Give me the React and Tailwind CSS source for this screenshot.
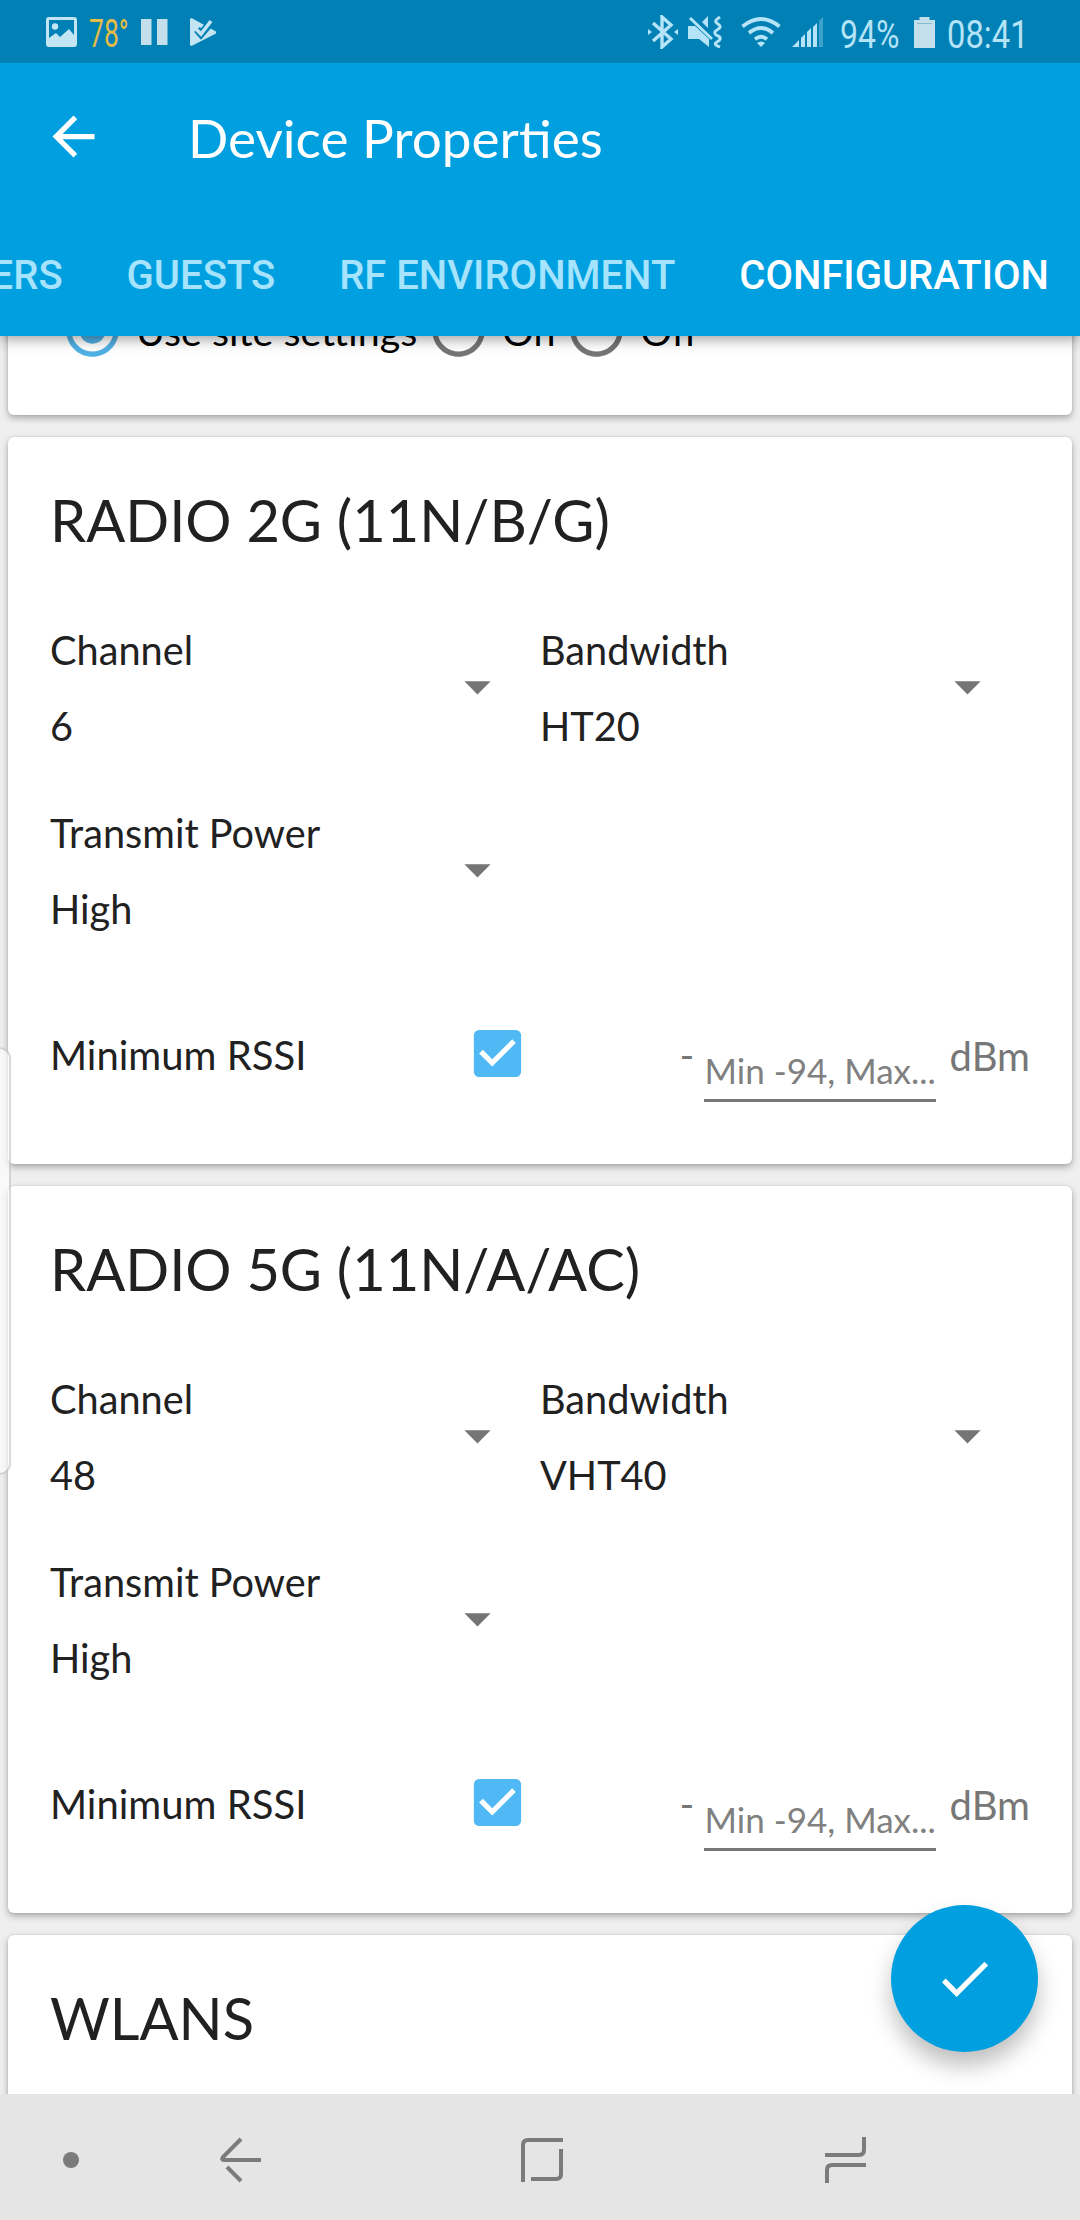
import { clsx } from 'clsx';
import {
  MdArrowBack,
  MdArrowDropDown,
  MdCheck,
  MdCheckBox,
  MdRadioButtonChecked,
  MdRadioButtonUnchecked,
} from 'react-icons/md';

const tabs = ['USERS', 'GUESTS', 'RF ENVIRONMENT', 'CONFIGURATION'];

const radios = [
  { title: 'RADIO 2G (11N/B/G)', channel: '6', bandwidth: 'HT20', power: 'High' },
  { title: 'RADIO 5G (11N/A/AC)', channel: '48', bandwidth: 'VHT40', power: 'High' },
];

const StatusBar = () => (
  <div className="flex h-[63px] items-center bg-[#0080b4] pt-px font-[Roboto,sans-serif] text-[39px] leading-[58px] text-[#b5e3f7]">
    {/* Notifications */}
    <svg className="ml-[46px] w-[31px] shrink-0" viewBox="0 0 31 30" fill="#c3e4f2">
      <path
        fillRule="evenodd"
        d="M3 0h25a3 3 0 0 1 3 3v24a3 3 0 0 1-3 3H3a3 3 0 0 1-3-3V3a3 3 0 0 1 3-3zM3 3v18l7-5 4 4 9-8 5 6V3z"
      />
      <circle cx="9" cy="9.500" r="3.200" />
    </svg>
    <span className="ml-[12px] w-[38px] origin-left scale-x-[0.68] pt-[4px] whitespace-nowrap text-[#e5bc45]">78°</span>
    <svg className="ml-[14px] w-[27px] shrink-0" viewBox="0 0 27 26" fill="#c3dfec">
      <path d="M0 0h10.500v26H0zM16 0h10.500v26H16z" />
    </svg>
    <svg className="ml-[22px] w-[27px] shrink-0" viewBox="0 0 27 28">
      <path d="M1.500 0L26 13.500v2L1.500 28 0 27V1z" fill="#c3e4f2" />
      <path d="M7 11.500l4 4.500L23 2" fill="none" stroke="#0080b4" strokeWidth="7.500" />
      <path d="M6.500 11.500l4.500 4.500L21 3" fill="none" stroke="#c3e4f2" strokeWidth="3.600" />
    </svg>

    {/* System icons */}
    <svg className="ml-[431px] w-[30px] shrink-0" viewBox="0 0 30 34" fill="none" stroke="#b5e3f7" strokeWidth="3.400">
      <path d="M5 8l18 16-9 8V2l9 8L5 26" />
      <path d="M0 14l4 3-4 3zM30 14l-4 3 4 3z" fill="#b5e3f7" stroke="none" />
    </svg>
    <svg className="ml-[10px] w-[34px] shrink-0" viewBox="0 0 34 32" fill="#b5e3f7">
      <path d="M0 10h7l14 13v8l-10-8H0zM14 6l6-6v12z" />
      <path d="M2 2l22 21" stroke="#b5e3f7" strokeWidth="3" />
      <path d="M32 1c-6 4-5 5-2 7s3 4-1 6-2 5 1 6 3 4-1 6 0 4 3 5" fill="none" stroke="#b5e3f7" strokeWidth="3" />
    </svg>
    <svg className="ml-[19px] w-[40px] shrink-0" viewBox="0 0 40 30" fill="none" stroke="#b5e3f7" strokeWidth="3.800">
      <path d="M1.500 9.500q18.500-15 37 0M8 16q12-10 24 0M14 22.200q6-5 12 0" />
      <path d="M16 26q4-3 8 0l-4 4z" fill="#b5e3f7" stroke="none" />
    </svg>
    <svg className="ml-[11px] w-[32px] shrink-0" viewBox="0 0 32 30" fill="#b5e3f7">
      <path d="M0 30l7-7v7zM9 21l4-4v13H9zM15 15l4-4v19h-4zM21 10l4-4v24h-4z" />
      <path d="M27 4l4-4v30h-4z" opacity="0.35" />
    </svg>
    <span className="ml-[16px] w-[63px] origin-left scale-x-[0.82] pt-[5px] whitespace-nowrap">94%</span>
    <svg className="ml-[11px] w-[21px] shrink-0" viewBox="0 0 21 31" fill="#c3dfec">
      <path d="M5.500 0h10v3H21v28H0V3h5.500z" />
      <path d="M3 6h15v1H3z" fill="#8db9cf" />
    </svg>
    <span className="ml-[12px] w-[80px] origin-left scale-x-[0.84] pt-[5px] whitespace-nowrap">08:41</span>
  </div>
);

const Header = () => (
  <header className="relative z-10 h-[336px] shrink-0 bg-[#009fe0] shadow-[0_4px_12px_rgba(0,0,0,0.35)]">
    <StatusBar />
    <div className="flex h-[147px] items-center text-white">
      <MdArrowBack className="ml-[42px] size-[63px]" />
      <h1 className="ml-[83px] pt-[2px] text-[53.1px] leading-[63px]">Device Properties</h1>
    </div>
    <nav className="flex h-[126px] justify-end gap-[64px] pr-[31px] font-[Roboto,sans-serif] text-[40px] leading-[132px] font-medium whitespace-nowrap">
      {tabs.map((tab) => (
        <span key={tab} className={clsx(tab === 'CONFIGURATION' ? 'text-white' : 'text-[#a6e3fc]')}>
          {tab}
        </span>
      ))}
    </nav>
  </header>
);

const Card = ({ className, children }) => (
  <section
    className={clsx(
      'mx-2 shrink-0 rounded-[6px] bg-white pr-[42px] pl-[42px] shadow-[0_3px_7px_rgba(0,0,0,0.3),0_0_2px_rgba(0,0,0,0.12)]',
      className
    )}
  >
    {children}
  </section>
);

const Select = ({ label, value }) => (
  <div className="flex h-[183px] w-[490px] items-start">
    <div className="w-[396px] text-[39.7px] leading-[76px]">
      <p>{label}</p>
      <p>{value}</p>
    </div>
    <MdArrowDropDown className="mt-[43px] size-[63px] text-[#757575]" />
  </div>
);

const RadioCard = ({ radio }) => (
  <Card className="mb-[22px] h-[727px]">
    <h2 className="pt-[48px] text-[57.75px] leading-[70px]">{radio.title}</h2>
    <div className="mt-[57px] flex flex-wrap">
      <Select label="Channel" value={radio.channel} />
      <Select label="Bandwidth" value={radio.bandwidth} />
      <Select label="Transmit Power" value={radio.power} />
    </div>
    <div className="mt-[37px] flex h-[80px] items-start text-[40px] leading-[80px]">
      <span className="w-[416px]">Minimum RSSI</span>
      <MdCheckBox className="mt-[7px] size-[63px] text-[#50b8f4]" />
      <span className="ml-[151px] w-[24px] text-[#777]">-</span>
      <span className="mt-[25px] h-[62px] w-[232px] border-b-3 border-[#777] pl-px text-[35px] leading-[60px] whitespace-nowrap text-[#808080]">
        Min -94, Max...
      </span>
      <span className="ml-[14px] pt-px text-[#777]">dBm</span>
    </div>
  </Card>
);

const SiteOption = ({ label, checked }) => (
  <div className="flex items-center">
    {checked ? (
      <MdRadioButtonChecked className="size-[63px] text-[#50b0e4]" />
    ) : (
      <MdRadioButtonUnchecked className="size-[63px] text-[#757575]" />
    )}
    <span className="ml-[12px]">{label}</span>
  </div>
);

const NavBar = () => (
  <footer className="h-[126px] shrink-0 bg-[#e5e5e5]">
    <svg className="size-full" viewBox="0 0 1080 126" fill="none" stroke="#7b7b7b" strokeWidth="4">
      <circle cx="71" cy="66" r="8" fill="#7b7b7b" stroke="none" />
      <path d="M241 45l-18 18q-2 3 1 3h37M227 73l14 14" />
      <path d="M523 88V51q0-5 5-5h35M561 55v25q0 5-5 5H531" />
      <path d="M864 43v13q0 5-5 5h-34M866 71h-34q-5 0-5 5v13" />
    </svg>
  </footer>
);

export default function App() {
  return (
    <div className="relative flex h-[2220px] w-[1080px] flex-col overflow-hidden bg-[#efefef] font-[Lato,sans-serif] text-[#212121]">
      <Header />

      <main className="flex flex-1 flex-col overflow-hidden">
        <Card className="-mt-[40px] mb-[22px] h-[119px] pt-[3px]">
          <div className="flex gap-[10px] pl-[11px] text-[39.4px] leading-[63px] text-black">
            <SiteOption label="Use site settings" checked />
            <SiteOption label="On" />
            <SiteOption label="Off" />
          </div>
        </Card>
        {radios.map((radio) => (
          <RadioCard key={radio.title} radio={radio} />
        ))}
        <Card className="h-[400px]">
          <h2 className="pt-[48px] text-[57.75px] leading-[70px]">WLANS</h2>
        </Card>
      </main>

      <NavBar />

      {/* Edge panel handle */}
      <div className="absolute top-[1047px] left-[-12px] h-[428px] w-[23px] rounded-[12px] border-2 border-black/15 bg-white/60" />

      {/* Save button */}
      <button className="absolute top-[1905px] left-[891px] flex size-[147px] items-center justify-center rounded-full bg-[#009fe0] text-white shadow-[0_14px_22px_rgba(0,0,0,0.25)]">
        <MdCheck className="size-[63px]" />
      </button>
    </div>
  );
}
